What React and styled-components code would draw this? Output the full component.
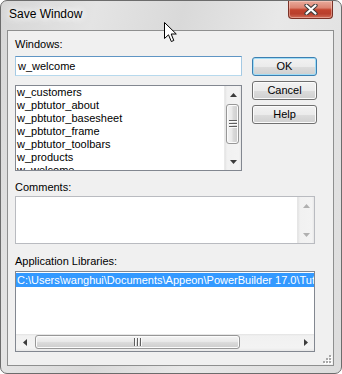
import React from "react";
import styled, { createGlobalStyle } from "styled-components";

const GlobalStyle = createGlobalStyle`
  html, body { margin: 0; padding: 0; background: #ffffff; }
  body {
    font-family: "Liberation Sans", Arial, sans-serif;
    font-size: 11px;
    color: #000;
  }
  * { box-sizing: border-box; }
`;

const Window = styled.div`
  position: relative;
  width: 342px;
  height: 374px;
  display: flex;
  flex-direction: column;
  padding: 0 7px 7px 6px;
  border: 1px solid #6c6c6c;
  border-radius: 7px;
  background: linear-gradient(
    105deg,
    #d6d6d6 0%,
    #e4e4e4 22%,
    #d9d9d9 42%,
    #e8e8e8 64%,
    #dcdcdc 100%
  );
  overflow: hidden;
`;

const TitleBar = styled.div`
  height: 29px;
  display: flex;
  align-items: flex-start;
  flex-shrink: 0;
`;

const Title = styled.div`
  margin: 6px 0 0 2px;
  font-size: 12px;
  line-height: 14px;
  color: #000;
  text-shadow: 0 0 6px #fff, 0 0 10px #fff, 0 0 14px #fff;
`;

const CloseButton = styled.div`
  margin-left: auto;
  margin-right: 1px;
  width: 45px;
  height: 18px;
  display: flex;
  align-items: center;
  justify-content: center;
  border: 1px solid #7a3126;
  border-top: none;
  border-radius: 0 0 4px 4px;
  background: linear-gradient(
    to bottom,
    #e9ab9c 0%,
    #dc8472 40%,
    #c2432e 52%,
    #b93f2c 75%,
    #d06c57 100%
  );
  box-shadow: inset 0 0 0 1px rgba(255, 220, 210, 0.45);
`;

const Client = styled.div`
  position: relative;
  flex: 1;
  display: flex;
  flex-direction: column;
  padding: 7px 7px 0 7px;
  border: 1px solid #8e8f8f;
  background: #f0f0f0;
`;

const TopSection = styled.div`
  display: flex;
  gap: 10px;
`;

const LeftCol = styled.div`
  width: 227px;
  display: flex;
  flex-direction: column;
`;

const Label = styled.div`
  line-height: 13px;
  height: 13px;
  margin-top: ${(p) => p.$top || 0}px;
  white-space: nowrap;
`;

const TextInput = styled.div`
  margin-top: 5px;
  height: 20px;
  padding: 0 2px;
  line-height: 18px;
  background: #fff;
  border: 1px solid;
  border-color: #5f95c4 #a4c9e3 #b7d9ed #a4c9e3;
`;

const Box = styled.div`
  margin-top: ${(p) => p.$top || 0}px;
  width: ${(p) => p.$width}px;
  height: ${(p) => p.$height}px;
  display: flex;
  flex-direction: ${(p) => (p.$column ? "column" : "row")};
  background: #fff;
  border: 1px solid ${(p) => (p.$light ? "#b9bbc0" : "#828790")};
  overflow: hidden;
`;

const Rows = styled.div`
  flex: 1;
  min-width: 0;
  overflow: hidden;
  padding-top: ${(p) => p.$pad || 0}px;
`;

const Row = styled.div`
  height: ${(p) => (p.$tall ? 14 : 13)}px;
  line-height: ${(p) => (p.$tall ? 14 : 13)}px;
  padding-left: 1px;
  white-space: nowrap;
  overflow: hidden;
  background: ${(p) => (p.$selected ? "#3399ff" : "transparent")};
  color: ${(p) => (p.$selected ? "#fff" : "#000")};
`;

const ButtonCol = styled.div`
  display: flex;
  flex-direction: column;
  gap: 5px;
  padding-top: 19px;
`;

const Button = styled.div`
  width: 65px;
  height: 19px;
  line-height: 17px;
  text-align: center;
  border: 1px solid ${(p) => (p.$default ? "#3c7fb1" : "#707070")};
  border-radius: 3px;
  background: linear-gradient(
    to bottom,
    #f2f2f2 0%,
    #ebebeb 50%,
    #dddddd 51%,
    #cfcfcf 100%
  );
  box-shadow: inset 0 0 0 1px ${(p) => (p.$default ? "#9fdcf6" : "#fbfbfb")};
`;

const VScroll = styled.div`
  width: 17px;
  flex-shrink: 0;
  display: flex;
  flex-direction: column;
  border-left: 1px solid ${(p) => (p.$disabled ? "#e6e6e6" : "transparent")};
  background: linear-gradient(
    to right,
    #e3e3e3 0,
    #f1f1f1 2px,
    #f3f3f3 14px,
    #e7e7e7 100%
  );
`;

const HScroll = styled.div`
  height: 17px;
  flex-shrink: 0;
  display: flex;
  background: linear-gradient(
    to bottom,
    #e3e3e3 0,
    #f1f1f1 2px,
    #f3f3f3 14px,
    #e7e7e7 100%
  );
`;

const ArrowBtn = styled.div`
  width: 17px;
  height: 17px;
  flex-shrink: 0;
  display: flex;
  align-items: center;
  justify-content: center;
`;

const Track = styled.div`
  flex: 1;
  display: flex;
  flex-direction: ${(p) => (p.$vertical ? "column" : "row")};
`;

const Thumb = styled.div`
  display: flex;
  align-items: center;
  justify-content: center;
  border: 1px solid #979797;
  border-radius: 3px;
  ${(p) =>
    p.$vertical
      ? `
    margin: 1px 2px 0 1px;
    height: ${p.$size}px;
    background: linear-gradient(to right, #f4f4f4 0%, #e9e9e9 45%, #dadada 55%, #cdcdcd 100%);
  `
      : `
    margin: 1px 0 2px 2px;
    width: ${p.$size}px;
    background: linear-gradient(to bottom, #f4f4f4 0%, #e9e9e9 45%, #dadada 55%, #cdcdcd 100%);
  `}
  box-shadow: inset 0 0 0 1px #fbfbfb;
`;

const Grip = styled.div`
  position: absolute;
  right: 1px;
  bottom: 1px;
  width: 9px;
  height: 9px;
  display: flex;
`;

const Cursor = styled.div`
  position: absolute;
  left: 163px;
  top: 21px;
  width: 14px;
  height: 21px;
  display: flex;
`;

const Arrow = ({ dir, disabled }) => {
  const color = disabled ? "#b0b0b0" : "#3c3c3c";
  const pts = {
    up: "0,4 3.5,0 7,4",
    down: "0,0 7,0 3.5,4",
    left: "4,0 4,7 0,3.5",
    right: "0,0 0,7 4,3.5",
  }[dir];
  const vertical = dir === "up" || dir === "down";
  return (
    <svg width={vertical ? 7 : 4} height={vertical ? 4 : 7} viewBox={vertical ? "0 0 7 4" : "0 0 4 7"}>
      <polygon points={pts} fill={color} />
    </svg>
  );
};

const ThumbLines = ({ vertical }) =>
  vertical ? (
    <svg width="8" height="8" viewBox="0 0 8 8">
      {[0, 3, 6].map((y) => (
        <g key={y}>
          <rect x="0" y={y} width="8" height="1" fill="#5e5e5e" />
          <rect x="0" y={y + 1} width="8" height="1" fill="#fafafa" />
        </g>
      ))}
    </svg>
  ) : (
    <svg width="8" height="8" viewBox="0 0 8 8">
      {[0, 3, 6].map((x) => (
        <g key={x}>
          <rect x={x} y="0" width="1" height="8" fill="#5e5e5e" />
          <rect x={x + 1} y="0" width="1" height="8" fill="#fafafa" />
        </g>
      ))}
    </svg>
  );

const windows = [
  "w_customers",
  "w_pbtutor_about",
  "w_pbtutor_basesheet",
  "w_pbtutor_frame",
  "w_pbtutor_toolbars",
  "w_products",
  "w_welcome",
];

const App = () => (
  <>
    <GlobalStyle />
    <Window>
      <TitleBar>
        <Title>Save Window</Title>
        <CloseButton>
          <svg width="14" height="11" viewBox="0 0 14 11">
            <path d="M2.5 1.5 L11.5 9.5 M11.5 1.5 L2.5 9.5" stroke="#3b3b3b" strokeWidth="4.2" strokeLinecap="round" />
            <path d="M2.5 1.5 L11.5 9.5 M11.5 1.5 L2.5 9.5" stroke="#ffffff" strokeWidth="2.2" strokeLinecap="round" />
          </svg>
        </CloseButton>
      </TitleBar>

      <Client>
        <TopSection>
          <LeftCol>
            <Label>Windows:</Label>
            <TextInput>w_welcome</TextInput>
            <Box $top={9} $width={227} $height={86}>
              <Rows>
                {windows.map((w) => (
                  <Row key={w}>{w}</Row>
                ))}
              </Rows>
              <VScroll>
                <ArrowBtn>
                  <Arrow dir="up" />
                </ArrowBtn>
                <Track $vertical>
                  <Thumb $vertical $size={40}>
                    <ThumbLines vertical />
                  </Thumb>
                </Track>
                <ArrowBtn>
                  <Arrow dir="down" />
                </ArrowBtn>
              </VScroll>
            </Box>
          </LeftCol>
          <ButtonCol>
            <Button $default>OK</Button>
            <Button>Cancel</Button>
            <Button>Help</Button>
          </ButtonCol>
        </TopSection>

        <Label $top={10}>Comments:</Label>
        <Box $top={2} $width={300} $height={48} $light>
          <Rows />
          <VScroll $disabled>
            <ArrowBtn>
              <Arrow dir="up" disabled />
            </ArrowBtn>
            <Track $vertical />
            <ArrowBtn>
              <Arrow dir="down" disabled />
            </ArrowBtn>
          </VScroll>
        </Box>

        <Label $top={11}>Application Libraries:</Label>
        <Box $top={3} $width={300} $height={81} $column>
          <Rows $pad={1}>
            <Row $tall $selected>
              C:\Users\wanghui\Documents\Appeon\PowerBuilder 17.0\Tutorial\pbtutor.pbl
            </Row>
          </Rows>
          <HScroll>
            <ArrowBtn>
              <Arrow dir="left" />
            </ArrowBtn>
            <Track>
              <Thumb $size={205}>
                <ThumbLines />
              </Thumb>
            </Track>
            <ArrowBtn>
              <Arrow dir="right" />
            </ArrowBtn>
          </HScroll>
        </Box>

        <Grip>
          <svg width="9" height="9" viewBox="0 0 9 9">
            {[
              [6, 0],
              [6, 3],
              [3, 3],
              [6, 6],
              [3, 6],
              [0, 6],
            ].map(([x, y]) => (
              <g key={`${x}-${y}`}>
                <rect x={x + 1} y={y + 1} width="2" height="2" fill="#ffffff" />
                <rect x={x} y={y} width="2" height="2" fill="#a8a8a8" />
              </g>
            ))}
          </svg>
        </Grip>
      </Client>

      <Cursor>
        <svg width="14" height="21" viewBox="0 0 14 21">
          <path
            d="M0.5 0.5 L0.5 16.5 L4.5 12.8 L7.3 19.5 L9.8 18.5 L7.2 12 L12.3 12 Z"
            fill="#ffffff"
            stroke="#000000"
            strokeWidth="1"
            strokeLinejoin="miter"
          />
        </svg>
      </Cursor>
    </Window>
  </>
);

export default App;
